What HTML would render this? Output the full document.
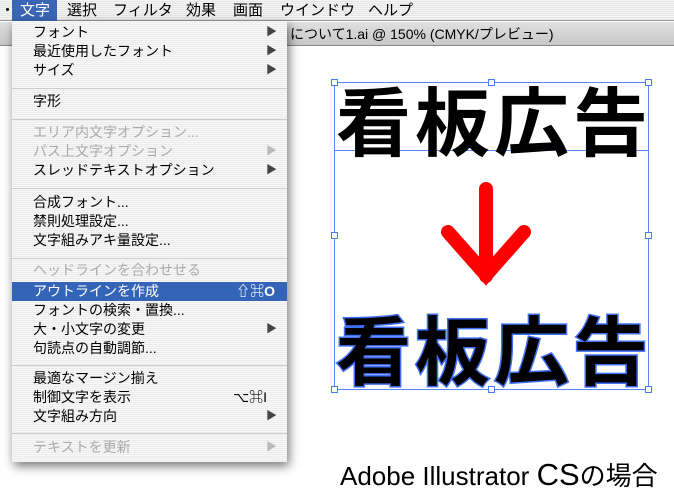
<!DOCTYPE html>
<html><head><meta charset="utf-8"><style>
*{margin:0;padding:0;box-sizing:border-box}
body{width:674px;height:497px;overflow:hidden;background:#fff;position:relative;font-family:"Liberation Sans","Noto Sans CJK JP",sans-serif}
#mb{position:absolute;left:0;top:0;width:674px;height:21px;background:repeating-linear-gradient(#f4f4f4 0 1px,#e6e6e6 1px 2px);border-bottom:1px solid #999}
#mb span{position:absolute;top:1px;font-size:15px;line-height:19px;color:#000}
#title{position:absolute;left:0;top:22px;width:674px;height:24px;background:linear-gradient(#e0e0e0,#c8c8c8);border-bottom:1px solid #888;font-size:14px;line-height:24px}
#menu{position:absolute;left:12px;top:21px;width:275px;height:441px;background:repeating-linear-gradient(#f7f7f7 0 1px,#ececec 1px 2px);box-shadow:2px 4px 10px rgba(0,0,0,.55)}
.it{position:absolute;left:0;width:275px;height:19px;font-size:14px;line-height:19px;padding-left:21px;color:#000}
.d{color:#aaa}
.ar{position:absolute;right:10px;top:0;font-size:11px;color:#444}
.d .ar{color:#bbb}
.sep{position:absolute;left:0;width:275px;height:1px;background:#ccc}
.hl{background:#3464b8;color:#fff}
.h{position:absolute;width:7px;height:7px;border:1px solid #4a7cf0;background:#fff}
.big{position:absolute;left:336px;font-size:75px;font-weight:bold;letter-spacing:4px;line-height:80px;font-family:"Noto Sans CJK JP",sans-serif}
</style></head><body>
<div id="mb">
<span style="left:0">・</span>
<span style="left:12px;top:0;width:45px;height:21px;background:#3a66b5;color:#fff;padding-left:8px;line-height:21px">文字</span>
<span style="left:67px">選択</span>
<span style="left:113px">フィルタ</span>
<span style="left:186px">効果</span>
<span style="left:233px">画面</span>
<span style="left:280px">ウインドウ</span>
<span style="left:368px">ヘルプ</span>
</div>
<div id="title"><span style="position:absolute;left:290px">について1.ai @ 150% (CMYK/プレビュー)</span></div>

<div style="position:absolute;left:334px;top:82px;width:315px;height:308px;border:1px solid #5a86f0"></div>
<div style="position:absolute;left:334px;top:150px;width:315px;height:1px;background:#5a86f0"></div>
<div class="big" style="top:78px">看板広告</div>
<div class="big" style="top:307px;-webkit-text-stroke:3px #3f6ff5;paint-order:stroke fill">看板広告</div>
<div class="h" style="left:331px;top:79px"></div><div class="h" style="left:488px;top:79px"></div><div class="h" style="left:645px;top:79px"></div>
<div class="h" style="left:331px;top:232px"></div><div class="h" style="left:645px;top:232px"></div>
<div class="h" style="left:331px;top:386px"></div><div class="h" style="left:488px;top:386px"></div><div class="h" style="left:645px;top:386px"></div>
<svg style="position:absolute;left:0;top:0" width="674" height="497"><path d="M486 189V276M448 232L486 275L524 232" stroke="#f00" stroke-width="14" fill="none" stroke-linecap="round" stroke-linejoin="miter"/><path d="M486 189V200" stroke="#f00" stroke-width="14"/></svg>

<div id="menu">
<div class="it" style="top:2px">フォント<span class="ar">▶</span></div>
<div class="it" style="top:21px">最近使用したフォント<span class="ar">▶</span></div>
<div class="it" style="top:40px">サイズ<span class="ar">▶</span></div>
<div class="sep" style="top:67px"></div>
<div class="it" style="top:71px">字形</div>
<div class="sep" style="top:98px"></div>
<div class="it d" style="top:102px">エリア内文字オプション...</div>
<div class="it d" style="top:121px">パス上文字オプション<span class="ar">▶</span></div>
<div class="it" style="top:140px">スレッドテキストオプション<span class="ar">▶</span></div>
<div class="sep" style="top:167px"></div>
<div class="it" style="top:172px">合成フォント...</div>
<div class="it" style="top:191px">禁則処理設定...</div>
<div class="it" style="top:210px">文字組みアキ量設定...</div>
<div class="sep" style="top:237px"></div>
<div class="it d" style="top:240px">ヘッドラインを合わせせる</div>
<div class="it hl" style="top:261px">アウトラインを作成<span style="position:absolute;right:12px;font-weight:bold">⇧⌘O</span></div>
<div class="it" style="top:280px">フォントの検索・置換...</div>
<div class="it" style="top:299px">大・小文字の変更<span class="ar">▶</span></div>
<div class="it" style="top:318px">句読点の自動調節...</div>
<div class="sep" style="top:344px"></div>
<div class="it" style="top:348px">最適なマージン揃え</div>
<div class="it" style="top:367px">制御文字を表示<span style="position:absolute;right:20px">⌥⌘I</span></div>
<div class="it" style="top:386px">文字組み方向<span class="ar">▶</span></div>
<div class="sep" style="top:412px"></div>
<div class="it d" style="top:417px">テキストを更新<span class="ar">▶</span></div>
</div>

<div style="position:absolute;left:340px;top:458px;font-size:26px;line-height:34px;white-space:nowrap">Adobe Illustrator <span style="font-size:31px">CS</span>の場合</div>
</body></html>
